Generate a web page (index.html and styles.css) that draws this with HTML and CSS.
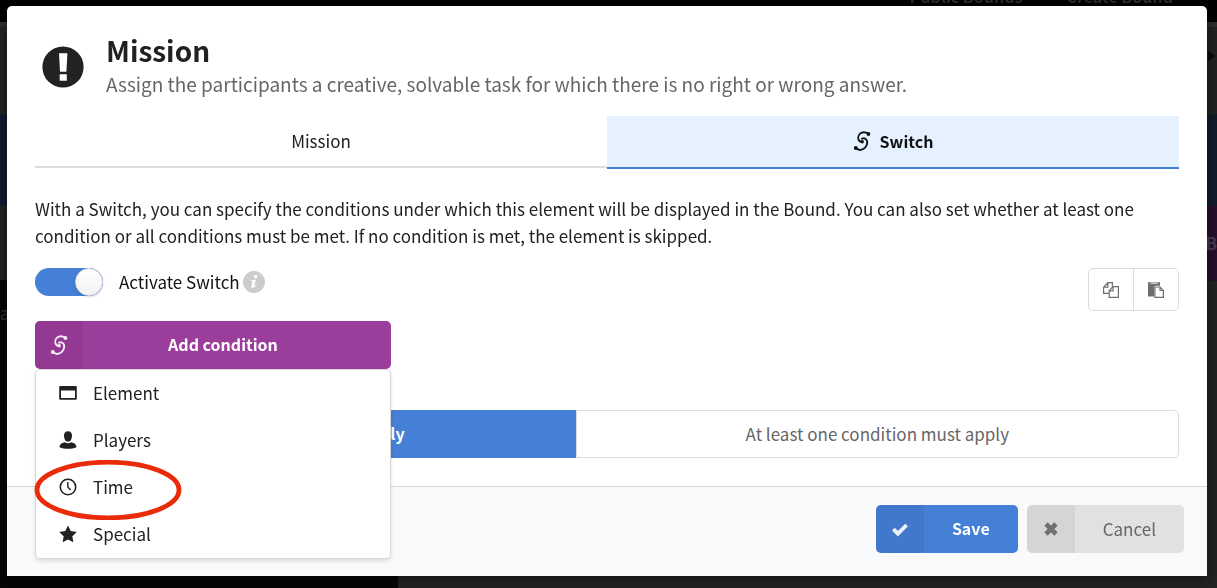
FILE: index.html
```html
<!DOCTYPE html>
<html lang="en">
<head>
<meta charset="utf-8">
<meta name="viewport" content="width=device-width, initial-scale=1">
<title>Mission</title>
<link rel="stylesheet" href="styles.css">
</head>
<body>
<svg class="symbols" aria-hidden="true">
  <symbol id="i-switch" viewBox="0 0 18 20">
    <g fill="none" stroke="currentColor" stroke-width="1.9" stroke-linecap="round">
      <path d="M15.500 2.800C12.500 .9 9.200 1 7.200 2.600C5 4.500 4.800 7.600 6 9.400C6.900 10.700 8.200 11 9.300 10.900"/>
      <path d="M9 7.800C11 6.600 13.200 7.600 13.900 9.700C14.800 12.600 13.300 16.200 10.600 17.800C8 19.300 5 19 3.200 17.200"/>
    </g>
    <circle cx="15.400" cy="3" r="1.900" fill="currentColor"/>
    <circle cx="9.200" cy="10.700" r="1.700" fill="currentColor"/>
    <circle cx="2.800" cy="17" r="2" fill="currentColor"/>
  </symbol>
</svg>

<div class="backdrop" aria-hidden="true">
  <div class="site-nav"><span>Public Bounds</span><span>Create Bound</span></div>
  <div class="site-body">
    <div class="site-side"><span class="side-letter">a</span></div>
    <div class="site-main"><span class="side-arrow"></span><span class="site-tile">B</span></div>
  </div>
</div>

<main class="modal" role="dialog" aria-labelledby="title">
  <div class="content">
    <header class="heading">
      <svg class="heading-icon" viewBox="0 0 42 42" aria-hidden="true"><circle cx="21" cy="21" r="20.600" fill="#222"/><path d="M17 7.300h8.400l-1 18.400h-6.400zM17.700 28.300h7.100v6.500h-7.100z" fill="#fff"/></svg>
      <div>
        <h1 class="title" id="title">Mission</h1>
        <p class="subtitle">Assign the participants a creative, solvable task for which there is no right or wrong answer.</p>
      </div>
    </header>

    <nav class="tabs">
      <a class="tab" href="#mission">Mission</a>
      <a class="tab tab-active" href="#switch"><svg class="icon-switch"><use href="#i-switch"/></svg>Switch</a>
    </nav>

    <p class="description">With a Switch, you can specify the conditions under which this element will be displayed in the Bound. You can also set whether at least one condition or all conditions must be met. If no condition is met, the element is skipped.</p>

    <div class="toolbar">
      <div class="toggle-row">
        <input class="toggle" type="checkbox" id="activate" checked>
        <label for="activate">Activate Switch</label>
        <svg class="info" viewBox="0 0 22 22" aria-hidden="true"><circle cx="11" cy="11" r="11" fill="#ccc"/><g fill="#fff"><ellipse cx="12.600" cy="5.600" rx="1.800" ry="1.700"/><path d="M8 9.200c1.800-.2 3.400-.6 4.900-.8l-1.700 6.300c-.2.900.5.700 1.600-.5l.5.500c-1.800 2.300-5.500 3.400-5 .6l1.200-4.500c.2-.8-.3-1-1.500-.9z"/></g></svg>
      </div>
      <div class="icon-group">
        <button class="icon-button" type="button" aria-label="Copy"><svg viewBox="0 0 18 18" fill="none" stroke="currentColor" stroke-width="1.200"><path d="M6.800 12.400H1.600V6.200L5.800 1.600h4.600v3.400M1.600 6.200h4.200V1.600M10.800 5.600h5.600v10.800H7.200V9.800zM7.200 9.800h3.900V5.600"/></svg></button>
        <button class="icon-button" type="button" aria-label="Paste"><svg viewBox="0 0 18 18"><path d="M1 1.200h12v3.600H8.200L7 6v9.400H1z" fill="currentColor"/><path d="M3.600 2.300h7" stroke="#ddd" stroke-width="1.200"/><path d="M7.900 6h5.200l3.300 3.400v7H7.900zM13 6v3.500h3.400" fill="#fff" stroke="currentColor" stroke-width="1.200"/></svg></button>
      </div>
    </div>

    <div class="dropdown">
      <button class="button button-purple" type="button" aria-expanded="true"><span class="button-icon"><svg class="icon-switch"><use href="#i-switch"/></svg></span><span class="button-label">Add condition</span></button>
      <div class="menu">
        <button class="menu-item" type="button"><svg viewBox="0 0 18 18"><path d="M1.200 2h15.600q1 0 1 1v11.800q0 1-1 1H1.200q-1 0-1-1V3q0-1 1-1zM2 6.500v7.400h14V6.500z" fill="currentColor" fill-rule="evenodd"/></svg>Element</button>
        <button class="menu-item" type="button"><svg viewBox="0 0 18 18" fill="currentColor"><path d="M9 .3c2.800 0 4.200 1.900 4 4.600-.2 2.900-1.300 5.700-4 5.700s-3.800-2.800-4-5.700C4.800 2.200 6.200.3 9 .3zM.5 16.200c.2-3.200 2.400-4.200 5.200-5 2 1.300 4.600 1.300 6.600 0 2.800.8 5 1.800 5.200 5-5.500 2.200-11.500 2.200-17 0z"/></svg>Players</button>
        <button class="menu-item" type="button"><svg viewBox="0 0 18 18" fill="none" stroke="currentColor"><circle cx="9" cy="9" r="7.700" stroke-width="1.600"/><path d="M8.800 4v5l2.800 3" stroke-width="1.400"/></svg>Time
          <svg class="marker" viewBox="0 0 148 60" aria-hidden="true"><ellipse cx="74" cy="30" rx="71" ry="27.800" fill="none" stroke="#ea2b0a" stroke-width="4.800"/></svg></button>
        <button class="menu-item" type="button"><svg viewBox="0 0 18 18" fill="currentColor"><path d="M9 .4l2.700 5.700 6.100.8-4.500 4.300 1.100 6.100L9 14.400l-5.400 2.900 1.100-6.100L.2 6.900l6.100-.8z"/></svg>Special</button>
      </div>
    </div>

    <div class="segments">
      <button class="segment segment-active" type="button">All conditions must apply</button>
      <button class="segment" type="button">At least one condition must apply</button>
    </div>
  </div>

  <footer class="actions">
    <button class="button button-blue" type="button"><span class="button-icon"><svg viewBox="0 0 18 18"><path d="M2.400 9.200l4.500 4.500 8.700-8.700" fill="none" stroke="currentColor" stroke-width="3.800"/></svg></span><span class="button-label">Save</span></button>
    <button class="button button-gray" type="button"><span class="button-icon"><svg viewBox="0 0 18 18"><path d="M4 4l10 10M14 4L4 14" fill="none" stroke="currentColor" stroke-width="4.600"/></svg></span><span class="button-label">Cancel</span></button>
  </footer>
</main>
</body>
</html>
```
FILE: styles.css
```css
*, ::before { box-sizing: border-box; }

body {
  margin: 0;
  padding: 6px 10px 12px 7px;
  background: #222;
  color: #212121;
  font-family: "Noto Sans CJK SC", "Noto Sans", sans-serif;
  font-size: 17px;
  line-height: 27px;
}

h1, p { margin: 0; }

button {
  font: inherit;
  color: inherit;
  cursor: pointer;
}

.symbols {
  position: absolute;
  width: 0;
  height: 0;
}

/* Dimmed page behind the dialog */
.backdrop {
  position: fixed;
  inset: 0;
  z-index: -1;
  display: flex;
  flex-direction: column;
  overflow: hidden;
}

.site-nav {
  display: flex;
  justify-content: flex-end;
  align-items: flex-end;
  gap: 44px;
  height: 22px;
  padding: 0 44px 16px 0;
  background: #000;
  color: #2c2c2c;
  font-size: 16px;
  font-weight: 700;
  line-height: 20px;
}

.site-body {
  display: flex;
  flex: 1;
  border-top: 5px solid #2a2c2e;
}

.site-side {
  flex: 0 0 398px;
  padding-top: 272px;
  background: linear-gradient(#222 0 87px, #101a2b 87px 179px, #222 179px 253px, #060606 253px);
  color: #333;
}

.site-main {
  position: relative;
  flex: 1;
  background: linear-gradient(#222 0 87px, #111c29 87px 179px, #222 179px);
}

.site-tile {
  position: absolute;
  right: 0;
  top: 179px;
  width: 40px;
  height: 75px;
  padding-top: 23px;
  background: #25102b;
  color: #4a3a4e;
  font-weight: 700;
  text-align: right;
}

.side-arrow {
  position: absolute;
  right: -4px;
  top: 24px;
  border: 5px solid transparent;
  border-left: 8px solid #0b0b0b;
}

/* Dialog */
.modal {
  border-radius: 5px 5px 0 0;
  background: #fff;
  box-shadow: 1px 3px 10px rgba(0, 0, 0, .4);
}

.content { padding: 28px; }

.heading {
  display: flex;
  align-items: center;
  gap: 22px;
  padding-left: 7px;
}

.heading-icon {
  flex: none;
  width: 42px;
  height: 42px;
}

.title {
  font-size: 28px;
  line-height: 32px;
}

.subtitle {
  padding-top: 2px;
  color: #666;
  font-size: 19px;
  line-height: 32px;
}

.tabs {
  display: flex;
  align-items: flex-start;
  margin-top: 16px;
}

.tab {
  display: flex;
  flex: 1;
  align-items: center;
  justify-content: center;
  gap: 9px;
  height: 52px;
  padding-bottom: 1px;
  border-bottom: 2px solid #dcdcdc;
  color: #212121;
  text-decoration: none;
}

.tab-active {
  height: 53px;
  border-color: #457fd6;
  background: #e5f1ff;
  color: #111;
  font-size: 16px;
  font-weight: 700;
}

.icon-switch {
  width: 18px;
  height: 20px;
}

.description { margin-top: 26px; }

.toolbar {
  display: flex;
  align-items: flex-start;
  justify-content: space-between;
  margin-top: 19px;
}

.toggle-row {
  display: flex;
  align-items: center;
  color: #111;
}

.toggle-row label { padding-bottom: 1px; }

.toggle {
  appearance: none;
  width: 68px;
  height: 28px;
  margin: 0 16px 0 0;
  border-radius: 14px;
  background: #457fd6;
}

.toggle::before {
  content: "";
  display: block;
  width: 28px;
  height: 28px;
  margin-left: auto;
  border: 1px solid #d8d8d8;
  border-radius: 50%;
  background: linear-gradient(#fff, #f2f2f2);
  box-shadow: 0 1px 2px rgba(0, 0, 0, .15);
}

.info {
  width: 22px;
  height: 22px;
  margin-left: 3px;
}

.icon-group {
  display: flex;
  border: 1px solid #dcdcdc;
  border-radius: 5px;
}

.icon-button {
  display: grid;
  place-items: center;
  width: 44px;
  height: 41px;
  padding: 0;
  border: 0;
  background: none;
  color: #6e6e6e;
}

.icon-button + .icon-button {
  width: 45px;
  border-left: 1px solid #dcdcdc;
}

.icon-button svg,
.menu-item > svg,
.button-icon svg {
  width: 18px;
  height: 18px;
}

.button {
  display: flex;
  align-items: center;
  height: 48px;
  padding: 0;
  border: 0;
  border-radius: 5px;
  overflow: hidden;
}

.button-icon {
  display: grid;
  place-items: center;
  width: 48px;
  height: 100%;
  background: rgba(0, 0, 0, .05);
}

.button-icon svg { opacity: .9; }

.button-icon .icon-switch { height: 20px; }

.button-label {
  flex: 1;
  padding: 0 28px 1px;
}

.button-purple {
  width: 100%;
  background: #9b3d9b;
  color: #fff;
  font-size: 16px;
  font-weight: 700;
}

.button-purple .button-label { padding-right: 56px; }

.button-blue {
  background: #457fd6;
  color: #fff;
  font-size: 16px;
  font-weight: 700;
}

.button-gray {
  background: #e0e1e2;
  color: #666;
}

.dropdown {
  position: relative;
  width: 356px;
  margin-top: 10px;
}

.menu {
  position: absolute;
  top: 100%;
  left: 0;
  right: 0;
  z-index: 1;
  border: 1px solid #d8d8da;
  border-radius: 5px;
  background: #fff;
  box-shadow: 0 2px 4px rgba(0, 0, 0, .12);
}

.menu-item {
  position: relative;
  display: flex;
  align-items: center;
  gap: 16px;
  width: 100%;
  height: 47px;
  padding: 0 23px 2px;
  border: 0;
  background: none;
}

.marker.marker {
  position: absolute;
  top: -4px;
  left: -2px;
  width: 148px;
  height: 60px;
}

.segments {
  display: flex;
  margin-top: 41px;
}

.segment {
  flex: 1 1 auto;
  height: 48px;
  padding: 0 20px 1px;
  border: 1px solid #dcdcdc;
  border-radius: 0 5px 5px 0;
  background: #fff;
  color: #666;
}

.segment-active {
  padding: 0 22px 1px;
  border: 0;
  border-radius: 5px 0 0 5px;
  background: #457fd6;
  color: #fff;
  font-size: 16px;
  font-weight: 700;
}

.actions {
  display: flex;
  justify-content: flex-end;
  gap: 9px;
  padding: 18px 23px 23px;
  border-top: 1px solid #d4d8da;
  background: #f9fafc;
}
```
